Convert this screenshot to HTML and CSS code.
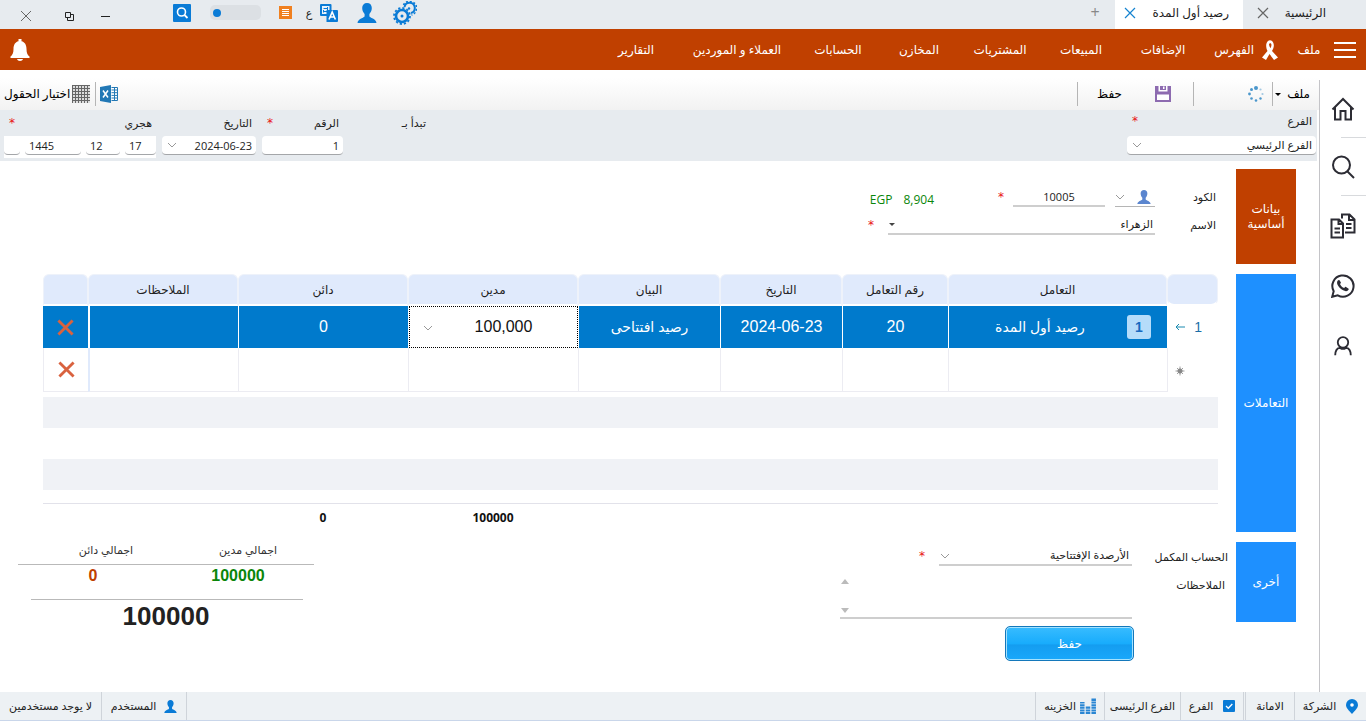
FILE: index.html
```html
<!DOCTYPE html>
<html lang="ar" dir="rtl">
<head>
<meta charset="utf-8">
<meta name="viewport" content="width=device-width, initial-scale=1">
<title>رصيد أول المدة</title>
<link rel="stylesheet" href="styles.css">
</head>
<body>
<svg class="defs" aria-hidden="true">
  <symbol id="x" viewBox="0 0 12 12"><path d="M1 1l10 10M11 1L1 11"/></symbol>
  <symbol id="chev" viewBox="0 0 10 6"><path d="M1 1l4 4 4-4"/></symbol>
  <symbol id="user" viewBox="0 0 20 20"><path d="M10 0c-3 0-4.800 2-4.800 5 0 2.800 1.200 4.600 2.400 5.900v2.600C6 15.200 1 15.800 0.500 20h19c-.5-4.200-5.500-4.800-7.100-6.500v-2.600c1.200-1.300 2.400-3.100 2.400-5.900 0-3-1.800-5-4.800-5z"/></symbol>
</svg>

<header class="titlebar">
  <div class="tabs">
    <div class="tab"><a href="#">الرئيسية</a><button aria-label="إغلاق"><svg class="ico12 line"><use href="#x"/></svg></button></div>
    <div class="tab tab-active"><a href="#">رصيد أول المدة</a><button aria-label="إغلاق"><svg class="ico12 line"><use href="#x"/></svg></button></div>
    <button class="tab-add" aria-label="تبويب جديد">+</button>
  </div>
  <div class="tools">
    <button class="w-gear" aria-label="الإعدادات"><svg width="24" height="24" viewBox="0 0 24 24" fill="none" stroke="#0a7bd6"><circle cx="9" cy="15" r="6" stroke-width="2.600"/><circle cx="9" cy="15" r="8" stroke-width="1.800" stroke-dasharray="2.200 2"/><circle cx="9" cy="15" r="1.500" fill="#0a7bd6" stroke="none"/><path d="M11.500 6A5.200 5.200 0 1 1 18 12" stroke-width="2"/><path d="M10.500 4A7 7 0 1 1 18.500 14" stroke-width="1.600" stroke-dasharray="2 1.800"/><circle cx="16" cy="7.500" r="1.200" fill="#0a7bd6" stroke="none"/></svg></button>
    <button class="w-user" aria-label="الحساب"><svg width="20" height="20" fill="#0a7bd6"><use href="#user"/></svg></button>
    <button class="w-lang" aria-label="اللغة"><svg width="18" height="18" viewBox="0 0 18 18"><rect width="11.500" height="12" rx="1" fill="#0a7bd6"/><path d="M2 2h7.500v8H2z" fill="#e8f3fc"/><path d="M3.500 4.500h4M7.500 3v4.500H4M3.500 6v2.500" stroke="#0a7bd6" fill="none"/><path d="M6.500 6H17q1 0 1 1v10q0 1-1 1H6.500z" fill="#0a7bd6"/><path d="M9 15.500l3.200-7.500 3.200 7.500M10 13h4.500" stroke="#fff" stroke-width="1.600" fill="none"/></svg><span>ع</span></button>
    <button class="w-note" aria-label="قائمة"><svg width="13" height="13" viewBox="0 0 13 13"><path d="M0 0h13v13H0z" fill="#f08020"/><path d="M3 3.500h7M3 5.500h7M3 7.500h7M3 9.500h7" stroke="#fff"/></svg></button>
    <span class="meter"><i></i></span>
    <button class="w-find" aria-label="بحث"><svg width="18" height="18" viewBox="0 0 18 18"><rect width="18" height="18" rx="1" fill="#0a7bd6"/><circle cx="8.500" cy="8" r="4" fill="none" stroke="#fff" stroke-width="1.600"/><path d="M11.500 11l3 3" stroke="#fff" stroke-width="1.800"/></svg></button>
    <button class="w-win" aria-label="تصغير"><svg class="line dark thin" width="9" height="12" viewBox="0 0 9 12"><path d="M0 6.500h9"/></svg></button>
    <button class="w-win" aria-label="استعادة"><svg class="line dark thin" width="9" height="9" viewBox="0 0 9 9"><path d="M.5.500h5v5h-5zM5.500 2.500h3v6h-6v-3"/></svg></button>
    <button class="w-end" aria-label="إغلاق النافذة"><svg class="ico12 line thin"><use href="#x"/></svg></button>
  </div>
</header>

<nav class="navbar">
  <button class="burger" aria-label="القائمة"><svg width="22" height="16" viewBox="0 0 22 16"><path d="M0 1h22M0 8h22M0 15h22" stroke="#fff" stroke-width="2"/></svg></button>
  <a class="n30" href="#">ملف</a>
  <a class="n90" href="#"><svg width="16" height="20" viewBox="0 0 16 20" fill="#fff"><path fill-rule="evenodd" d="M5.500 1.500Q8-1 10.500 1.500C13 5 11.500 8.500 10 11l6 6.500-4 2.500-4.500-6L4 20 0 17.500 5.500 11C4 8 3.500 4 5.500 1.500zM7 4.500c.2 1.500.8 2.700 1.500 3.700C9.500 6.500 9.800 4.500 9 3.500 8.300 3 7.300 3.200 7 4.500z"/></svg>الفهرس</a>
  <a class="n82" href="#">الإضافات</a>
  <a class="n82" href="#">المبيعات</a>
  <a class="n80" href="#">المشتريات</a>
  <a class="n82" href="#">المخازن</a>
  <a class="n80" href="#">الحسابات</a>
  <a class="n122" href="#">العملاء و الموردين</a>
  <a class="n80" href="#">التقارير</a>
  <button class="bell" aria-label="التنبيهات"><svg width="20" height="24" viewBox="0 0 20 24" fill="#fff"><path d="M8.500 1h3v2.300c3.300.700 5 3.700 5 7.700 0 4 .8 5.800 3 7.500v1.500H.5v-1.500c2.200-1.700 3-3.500 3-7.500 0-4 1.700-7 5-7.700z"/><path d="M7 21h6c-.5 2.500-5.500 2.500-6 0z"/></svg></button>
</nav>

<div class="shell">
  <aside class="side">
    <a href="#" aria-label="الرئيسية"><svg viewBox="0 0 24 24"><path d="M1.500 12.500L12 2l10.500 10.500M4 10.500V22.500h5.500V14h5v8.500H20V10.500"/></svg></a>
    <a href="#" aria-label="بحث"><svg viewBox="0 0 24 24"><circle cx="10.500" cy="10" r="8.500"/><path d="M16.500 16.500l6.500 6.500"/></svg></a>
    <a href="#" aria-label="المستندات"><svg class="docs" viewBox="0 0 26 26"><path d="M1.500 6.500H9l4 4v14H1.500zM8.500 6.500v4.500H13M12 5.500V1.500h7.500l5 5V19.500H15M19 1.500V7h5.500M4.500 15.500H10M4.500 19.500H10M16 11h5.500M16 15h5.500"/></svg></a>
    <a href="#" aria-label="واتساب"><svg viewBox="0 0 24 24"><path d="M1.200 22.800l1.500-5.600A10.600 10.600 0 1 1 6.800 21.300z"/><path class="fill" d="M8.500 6.300c-.6-.6-1.200-.3-1.700.3-2 2.600.5 6 2.700 8 2.300 2 5.700 3.600 7.600 1.700.9-.9.700-1.500.2-1.900l-2.300-1.500c-.7-.3-1 .2-1.700 1.100-2-.7-3.600-2.400-4.300-4.100.8-.7 1.100-1 .8-1.700z"/></svg></a>
    <a href="#" aria-label="المستخدم"><svg viewBox="0 0 24 24"><circle cx="12" cy="8" r="5.700"/><path d="M8 12.500c1 3.500 7 3.500 8 0M3.500 22c0-5 2-7.500 5-8.500M20.500 22c0-5-2-7.500-5-8.500"/></svg></a>
  </aside>

  <main class="main">
    <div class="toolbar">
      <button class="t-file">ملف<i class="caret"></i></button>
      <span class="t-spin"><svg width="18" height="18" viewBox="0 0 18 18" fill="#4b97cc"><circle cx="9" cy="3" r="2"/><circle cx="13.500" cy="4.500" r="1.100" opacity=".5"/><circle cx="15.500" cy="9" r="1.100" opacity=".5"/><circle cx="13.500" cy="13.500" r="1.200"/><circle cx="9" cy="15.500" r="1.300"/><circle cx="4.500" cy="13.500" r="1.300"/><circle cx="2.500" cy="9" r="1.400"/><circle cx="4.500" cy="4.500" r="1.500"/></svg></span>
      <button class="t-save"><svg width="16" height="16" viewBox="0 0 16 16"><path d="M0 0h16v16H0z" fill="#8d6bb0"/><path d="M3.500 0h9v5.500h-9zM2 8.500h12V14H2z" fill="#fff"/><path d="M5 0h6v4H5z" fill="#8d6bb0"/><path d="M8 0.500h1.500v2.500H8z" fill="#fff"/></svg><span>حفظ</span></button>
      <span class="grow"></span>
      <button class="t-excel" aria-label="تصدير إكسل"><svg width="18" height="18" viewBox="0 0 18 18"><path d="M0 2l11-2v18L0 16z" fill="#2278b5"/><path d="M11.500 2.500h6v13h-6" fill="#fff" stroke="#2278b5"/><path d="M11.500 5h6M11.500 7.700h6M11.500 10.400h6M11.500 13h6M14.500 2v14" stroke="#2278b5"/><path d="M3 5.500l5 7M8 5.500l-5 7" stroke="#fff" stroke-width="1.500"/></svg></button>
      <button class="t-cols"><i class="mesh"></i>اختيار الحقول</button>
    </div>

    <form class="filters">
      <div class="fcol f-branch">
        <div class="cap"><label for="branch">الفرع</label><b>*</b></div>
        <div class="box"><select id="branch"><option>الفرع الرئيسي</option></select><svg class="chev"><use href="#chev"/></svg></div>
      </div>
      <span class="grow"></span>
      <div class="fcol f-prefix"><div class="cap"><span>تبدأ بـ</span></div></div>
      <div class="fcol f-num">
        <div class="cap"><label for="num">الرقم</label><b>*</b></div>
        <div class="box"><input id="num" value="1"></div>
      </div>
      <div class="fcol f-date">
        <div class="cap"><label for="date">التاريخ</label></div>
        <div class="box"><input id="date" value="2024-06-23"><svg class="chev"><use href="#chev"/></svg></div>
      </div>
      <div class="fcol f-hijri">
        <div class="cap"><label for="hday">هجري</label><b>*</b></div>
        <div class="hijri"><div class="box h-day"><input id="hday" value="17"></div><div class="box h-mon"><input aria-label="الشهر" value="12"></div><div class="box h-year"><input aria-label="السنة" value="1445"></div><div class="box h-none"><input aria-label="إضافي"></div></div>
      </div>
    </form>

    <section class="block b-basic">
      <button class="stab stab-on">بيانات أساسية</button>
      <div class="basic">
        <div class="row">
          <label for="code" class="lab">الكود</label>
          <button class="picker" aria-label="اختيار العميل"><svg width="14" height="14" fill="#5b86cf"><use href="#user"/></svg><svg class="chv"><use href="#chev"/></svg></button>
          <input id="code" class="ul code" value="10005"><b>*</b>
          <output class="bal"><span>8,904</span><span>EGP</span></output>
        </div>
        <div class="row">
          <label for="name" class="lab">الاسم</label>
          <span class="name"><select id="name" class="ul"><option>الزهراء</option></select><i class="caret"></i></span><b>*</b>
        </div>
      </div>
    </section>

    <section class="block b-trans">
      <button class="stab">التعاملات</button>
      <table class="grid">
        <colgroup><col class="c51"><col class="c219"><col class="c106"><col class="c122"><col class="c142"><col class="c170"><col class="c170"><col class="c150"><col class="c45"></colgroup>
        <thead><tr><th></th><th>التعامل</th><th>رقم التعامل</th><th>التاريخ</th><th>البيان</th><th>مدين</th><th>دائن</th><th>الملاحظات</th><th></th></tr></thead>
        <tbody>
          <tr class="sel"><td class="idx"><span>1</span><svg width="10" height="8" viewBox="0 0 10 8"><path d="M10 4H1M4 1L1 4l3 3"/></svg></td><td><div class="deal"><em>1</em><span>رصيد أول المدة</span></div></td><td>20</td><td>2024-06-23</td><td>رصيد افتتاحى</td><td class="edit"><div><input aria-label="مدين" value="100,000"><svg class="chev"><use href="#chev"/></svg></div></td><td>0</td><td></td><td><button class="del" aria-label="حذف"><svg><use href="#x"/></svg></button></td></tr>
          <tr class="new"><td class="idx"><svg class="star" width="10" height="10" viewBox="0 0 10 10"><circle cx="5" cy="5" r="2.200"/><path d="M5 .5v9M.5 5h9M2 2l6 6M8 2L2 8"/></svg></td><td></td><td></td><td></td><td></td><td></td><td></td><td></td><td><button class="del" aria-label="حذف"><svg><use href="#x"/></svg></button></td></tr>
          <tr class="gap"><td colspan="9"></td></tr>
          <tr class="stripe"><td colspan="9"></td></tr>
          <tr class="blank"><td colspan="9"></td></tr>
          <tr class="stripe"><td colspan="9"></td></tr>
          <tr class="last"><td colspan="9"></td></tr>
        </tbody>
        <tfoot><tr><td colspan="5"></td><td>100000</td><td>0</td><td colspan="2"></td></tr></tfoot>
      </table>
    </section>

    <section class="block b-other">
      <button class="stab">أخرى</button>
      <div class="other">
        <label for="acc" class="olab">الحساب المكمل</label>
        <div class="acc"><span class="accbox"><select id="acc" class="ul"><option>الأرصدة الإفتتاحية</option></select><svg class="chev"><use href="#chev"/></svg></span><b>*</b></div>
        <label for="notes" class="olab nlab">الملاحظات</label>
        <div class="notes"><textarea id="notes"></textarea><i class="up"></i><i class="down"></i></div>
        <button class="save">حفظ</button>
      </div>
      <div class="sums">
        <div class="pair"><div>اجمالي مدين</div><div>اجمالي دائن</div></div>
        <div class="pair vals"><div class="green">100000</div><div class="red">0</div></div>
        <div class="total">100000</div>
      </div>
    </section>
  </main>
</div>

<footer class="status">
  <span class="s72"><svg width="12" height="15" viewBox="0 0 12 15"><path d="M6 0a6 6 0 0 1 6 6c0 3-3 5.500-6 9-3-3.500-6-6-6-9a6 6 0 0 1 6-6z" fill="#0a7bd6"/><circle cx="6" cy="6" r="1.800" fill="#fff"/></svg>الشركة</span>
  <span class="s50">الامانة</span>
  <span class="s64"><svg width="12" height="12" viewBox="0 0 12 12"><rect width="12" height="12" rx="1" fill="#0a7bd6"/><path d="M3 6l2.300 2.300L9.300 4" stroke="#fff" stroke-width="1.300" fill="none"/></svg>الفرع</span>
  <span class="s76">الفرع الرئيسى</span>
  <span class="s69"><svg width="16" height="16" viewBox="0 0 16 16" stroke="#2a86d3" stroke-width="4.500" stroke-dasharray="2 .6"><path d="M2.300 16V4M8 16V8M13.700 16V0"/></svg>الخزينه</span>
  <span class="grow"></span>
  <span class="s86"><svg width="13" height="13" fill="#0a7bd6"><use href="#user"/></svg>المستخدم</span>
  <span class="s101">لا يوجد مستخدمين</span>
</footer>
</body>
</html>
```

FILE: styles.css
```css
* { box-sizing: border-box; }
body { margin: 0; min-height: 100vh; display: flex; flex-direction: column; background: #fff; color: #222; font: 11px/16px "Open Sans", "DejaVu Sans", sans-serif; }
button, input, select, textarea { font: inherit; color: inherit; background: none; border: 0; border-radius: 0; padding: 0; margin: 0; outline: 0; }
select { appearance: none; }
textarea { resize: none; overflow: hidden; }
a { color: inherit; text-decoration: none; }
b { color: #e81010; font: 400 12px/12px "DejaVu Sans", sans-serif; }
.defs { position: absolute; width: 0; height: 0; }
.grow { flex: 1; }
.ico12 { width: 12px; height: 12px; display: block; }
.line { fill: none; stroke: #666; stroke-width: 1.2; }
.dark { stroke: #222; }
.thin { stroke-width: 1; }

/* Title bar */
.titlebar { height: 29px; display: flex; justify-content: space-between; background: #e7ebef; }
.tabs { display: flex; font-size: 12px; }
.tab { width: 123px; display: flex; align-items: center; justify-content: space-between; padding-inline: 40px 14px; white-space: nowrap; padding-bottom: 3px; }
.tab-active { width: 128px; background: #fff; padding-inline: 14px 9px; }
.tab-active .line { stroke: #1583d0; }
.tab-add { width: 40px; color: #888; font-size: 16px; padding-bottom: 5px; }
.tools { display: flex; align-items: center; padding-bottom: 4px; }
.tools button { display: flex; align-items: center; justify-content: center; }
.w-gear, .w-user { width: 38px; }
.tools .w-lang { width: 44px; gap: 8px; margin-inline-start: 4px; }
.w-note { width: 30px; }
.meter { width: 51px; height: 15px; border-radius: 5px; background: #dce0e4; margin-inline: 9px 10px; display: flex; align-items: center; justify-content: flex-end; padding-inline-end: 3px; }
.meter i { width: 8px; height: 8px; border-radius: 50%; background: #0a7bd6; }
.tools .w-find { width: 36px; margin-inline-end: 41px; }
.w-win { width: 36px; padding-top: 7px; }
.w-end { width: 51px; padding-top: 7px; }
.tools .w-win, .tools .w-end { padding-top: 7px; }

/* Main menu */
.navbar { height: 41px; display: flex; align-items: center; background: #c04000; color: #fff; font-size: 12px; }
.navbar a { display: flex; align-items: center; justify-content: center; white-space: nowrap; gap: 8px; }
.burger { width: 42px; display: flex; justify-content: center; }
.n30 { width: 30px; }
.navbar .n90 { width: 90px; justify-content: flex-start; padding-inline-start: 16px; }
.n82 { width: 82px; }
.n80 { width: 80px; }
.n122 { width: 122px; }
.bell { margin-inline-start: auto; margin-inline-end: 10px; display: flex; }

.shell { flex: 1; display: flex; }
.side { width: 47px; margin-top: 10px; border-left: 1px solid #c4c4c8; }
.side a { height: 58px; display: flex; align-items: center; justify-content: center; border-bottom: 1px solid transparent; border-image: linear-gradient(to left, #d8dadd 25px, transparent 25px) 1; }
.side a:nth-child(n+3) { border-image: none; height: 60px; }
.side svg { width: 24px; height: 24px; fill: none; stroke: #2c2c34; stroke-width: 2; }
.side .docs { width: 26px; height: 26px; }
.side a:last-child svg { width: 22px; }
.side .fill { fill: #2c2c34; stroke: none; }
.main { flex: 1; min-width: 0; }

/* Toolbar */
.toolbar { height: 40px; padding: 8px 0 0 4px; display: flex; align-items: center; font-size: 12px; background: linear-gradient(#fff 20%, #f2f2f2); color: #000; }
.toolbar > *:not(.grow) { height: 24px; display: flex; align-items: center; }
.t-file { width: 47px; padding-inline-start: 9px; gap: 6px; border-left: 1px solid #b5b5b5; }
.caret { border: 3px solid transparent; border-top-color: #000; border-bottom: 0; }
.t-spin { width: 79px; padding-inline-start: 7px; border-left: 1px solid #b5b5b5; }
.t-save { width: 116px; padding-inline-start: 22px; gap: 33px; border-left: 1px solid #b5b5b5; }
.t-excel { width: 23px; border-left: 1px solid #b5b5b5; margin-inline-end: 5px; }
.t-cols { gap: 2px; white-space: nowrap; }
.mesh { width: 18px; height: 18px; background: repeating-linear-gradient(90deg, #666 0 1px, transparent 1px 3px), repeating-linear-gradient(#666 0 1px, #ddd 1px 3px); }

/* Document header fields */
.filters { height: 51px; margin-right: 2px; padding-inline: 1px 4px; display: flex; background: #e7ebef; }
.cap { height: 26px; display: flex; align-items: center; justify-content: space-between; padding-inline: 4px 5px; }
.box { position: relative; height: 19px; background: #fff; border-bottom: 1px solid #a4a6a9; border-radius: 4px; }
.box input, .box select { width: 100%; height: 18px; display: block; padding-inline: 4px; }
.chev { position: absolute; left: 5px; top: 6px; width: 10px; height: 6px; fill: none; stroke: #999; }
.f-branch { width: 189px; }
.f-branch .cap { height: 21px; }
.f-branch .box { margin-top: 5px; }
.f-prefix { width: 30px; margin-inline-end: 57px; white-space: nowrap; }
.f-num { width: 81px; margin-inline-end: 6px; }
.f-date { width: 94px; margin-inline-end: 6px; }
.f-hijri { width: 152px; }
.hijri { display: flex; justify-content: space-between; height: 22px; background: #fff; }
.h-day { width: 31px; }
.h-mon { width: 34px; }
.h-year { width: 56px; }
.h-none { width: 16px; }
.hijri input { direction: ltr; text-align: left; padding-inline: 4px; }

/* Sections with a side tab */
.block { display: flex; margin: 0 23px 10px 43px; }
.b-basic { margin-top: 8px; min-height: 95px; }
.stab { width: 60px; flex: none; background: #1e90ff; color: #fff; font-size: 12px; line-height: 15px; padding: 0 6px 2px; }
.stab-on { background: #c04000; }
.basic { padding: 14px 18px 0 0; display: flex; flex-direction: column; }
.row { height: 28px; display: flex; align-items: center; }
.lab { width: 63px; padding-inline-start: 2px; }
.ul { border-bottom: 2px solid #cecece; height: 20px; }
.picker { width: 40px; height: 20px; display: flex; align-items: center; justify-content: space-between; padding-inline: 4px 0; border-bottom: 1px solid #b5b5b5; }
.chv { width: 10px; height: 6px; fill: none; stroke: #999; }
.code { width: 92px; margin-inline: 10px 9px; text-align: center; }
.bal { color: #0a860a; font-size: 12px; display: flex; gap: 11px; margin-inline-start: 64px; padding-top: 6px; }
.name { width: 267px; position: relative; margin-inline-end: 14px; }
.name select { width: 100%; padding-inline-start: 2px; display: block; }
.name .caret { position: absolute; left: 1px; top: 8px; border-top-color: #444; }

/* Transactions table */
.grid { flex: 1; min-width: 0; margin-right: 18px; border-collapse: separate; border-spacing: 0; table-layout: fixed; text-align: center; }
.c51 { width: 51px; }
.c219 { width: 219px; }
.c106 { width: 106px; }
.c122 { width: 122px; }
.c142 { width: 142px; }
.c170 { width: 170px; }
.c150 { width: 150px; }
.c45 { width: 45px; }
.grid td, .grid th { padding: 0; }
.grid th { height: 32px; font-size: 12px; font-weight: 400; background: #e0eafc; border: 1px solid #eef2fa; border-bottom: 2px solid #fff; border-radius: 6px 6px 0 0; }
.grid th:first-child { border-radius: 7px; }
.sel td { height: 42px; background: #007acc; color: #fff; border-left: 1px solid #fff; font: 16px/20px "Liberation Sans", "DejaVu Sans", sans-serif; }
.sel td:nth-child(8) { border-left: 2px solid #fff; }
.sel td:nth-child(2), .sel td:nth-child(5) { font-size: 14px; }
.sel td:last-child { border: 0; }
.new td { height: 44px; border-left: 1px solid #ececf2; border-bottom: 1px solid #ececf2; }
.new td:nth-child(8) { border-left: 2px solid #e0eafc; }
.grid .idx { background: none; border-bottom: 0; color: #1a6ea8; font-size: 14px; text-align: right; padding-right: 16px; }
.grid .new .idx { padding-right: 33px; }
.idx svg { fill: none; stroke: #1a8ab0; margin-right: 9px; vertical-align: 1px; }
.idx .star { margin: 0; fill: #888; stroke: #888; stroke-width: .8; vertical-align: -1px; }
.deal { display: flex; align-items: center; padding-inline: 16px 8px; }
.deal span { flex: 1; padding-inline-start: 4px; }
.deal em { width: 24px; height: 24px; border-radius: 3px; background: #b5dcfa; color: #1769c0; font-style: normal; font-weight: 700; line-height: 24px; }
.sel td.edit { background: #fff; color: #111; }
.edit div { position: relative; height: 42px; border: 1px dotted #000; }
.edit input { width: 100%; height: 40px; text-align: center; padding-left: 20px; }
.edit .chev { left: 13px; top: 18px; }
.del { display: inline-flex; vertical-align: middle; }
.del svg { width: 17px; height: 17px; fill: none; stroke: #d9623f; stroke-width: 2; }
.gap td { height: 5px; }
.stripe td { height: 31px; background: #f0f2f6; }
.blank td { height: 31px; }
.last td { height: 14px; border-bottom: 1px solid #e2e2ea; }
.grid tfoot td { height: 28px; font-weight: 700; font-size: 12px; color: #111; }

/* Balancing account, notes and totals */
.b-other { align-items: flex-start; margin-left: 18px; margin-bottom: 0; }
.b-other .stab { height: 80px; }
.other { display: grid; grid-template-columns: 96px 292px; grid-template-rows: 30px 54px 35px; margin-right: 8px; }
.olab { padding-top: 7px; white-space: nowrap; }
.nlab { padding-inline-start: 3px; padding-top: 5px; }
.acc { display: flex; padding-top: 4px; gap: 14px; height: 24px; align-items: center; }
.accbox { width: 193px; position: relative; }
.acc select { width: 100%; padding-inline-start: 3px; display: block; }
.acc .chev { left: 1px; top: 7px; }
.notes { position: relative; height: 47px; }
.notes textarea { width: 100%; height: 47px; border-bottom: 2px solid #cecece; display: block; }
.up, .down { position: absolute; left: 1px; border: 4px solid transparent; }
.up { top: 7px; border-bottom: 5px solid #bbb; border-top: 0; }
.down { bottom: 6px; border-top: 5px solid #bbb; border-bottom: 0; }
.save { grid-column: 2; margin-right: -2px; width: 129px; height: 35px; border: 1px solid #1478bb; border-radius: 5px; box-shadow: inset 0 0 0 1px #a5e2ff; color: #fff; font-size: 12px; background: linear-gradient(#38bcff, #18acfc 50%, #149df0 55%, #1aa8fb); }
.sums { width: 296px; margin-inline-start: auto; color: #333; text-align: center; }
.pair { display: grid; grid-template-columns: 132px 1fr; height: 23px; border-bottom: 1px solid #b9b9b9; }
.pair div:last-child { padding-left: 12px; }
.pair.vals { grid-template-columns: 130px 1fr; margin: 0 11px 0 13px; height: 35px; font: 700 16px/22px "Liberation Sans", sans-serif; }
.pair.vals div:last-child { padding: 0 18px 0 0; }
.green { color: #0a860a; }
.red { color: #c04000; }
.total { font: 700 26px/33px "Liberation Sans", sans-serif; color: #222; }

/* Status bar */
.status { height: 29px; display: flex; background: #edf1f4; border-bottom: 1px solid #c9d6ea; }
.status span:not(.grow) { display: flex; align-items: center; justify-content: center; gap: 10px; border-left: 1px solid #cfd4da; white-space: nowrap; }
.status .s72 { width: 72px; }
.status .s50 { width: 49px; }
.status span.s64 { width: 64px; border-right: 1px solid #cfd4da; margin-right: 1px; }
.status .s76 { width: 76px; }
.status span.s69 { width: 69px; gap: 4px; justify-content: flex-start; padding-right: 8px; }
.status span.s86 { width: 86px; gap: 8px; border-right: 1px solid #cfd4da; }
.status span.s101 { width: 101px; border: 0; }
```
